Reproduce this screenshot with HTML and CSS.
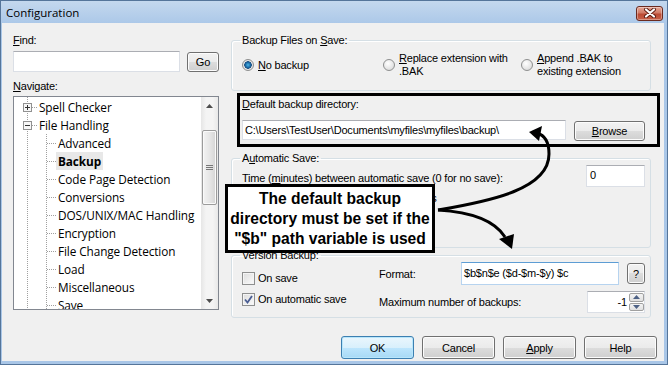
FILE: index.html
```html
<!DOCTYPE html>
<html lang="en">
<head>
    <meta charset="UTF-8">
    <title>Configuration</title>
    <link rel="stylesheet" href="styles.css">
</head>
<body>
    <div class="window">
        <div class="titlebar">
            <span class="title">Configuration</span>
            <div class="close-btn">
                <svg width="14" height="10" viewBox="0 0 14 10">
                    <path d="M3 1.5 L11 8.5 M11 1.5 L3 8.5" stroke="#5a1a10" stroke-width="4" stroke-linecap="round"/>
                    <path d="M3 1.5 L11 8.5 M11 1.5 L3 8.5" stroke="#ffffff" stroke-width="2.2" stroke-linecap="round"/>
                </svg>
            </div>
        </div>

        <div class="client">
            <div class="main">
                <!-- Find + navigation tree -->
                <div class="nav-panel">
                    <div class="lbl"><u>F</u>ind:</div>
                    <div class="find-row">
                        <div class="text-input find-input"></div>
                        <div class="btn go-btn">Go</div>
                    </div>
                    <div class="lbl nav-lbl"><u>N</u>avigate:</div>
                    <div class="tree">
                        <ul class="tree-list">
                            <li class="node">
                                <span class="expander">
                                    <svg width="9" height="9" viewBox="0 0 9 9"><rect x="0.5" y="0.5" width="8" height="8" fill="#f7f7f7" stroke="#919191"/><path d="M2 4.5 H7 M4.5 2 V7" stroke="#333"/></svg>
                                </span><span class="dots"></span><span class="node-text">Spell Checker</span>
                            </li>
                            <li class="node">
                                <span class="expander">
                                    <svg width="9" height="9" viewBox="0 0 9 9"><rect x="0.5" y="0.5" width="8" height="8" fill="#f7f7f7" stroke="#919191"/><path d="M2 4.5 H7" stroke="#333"/></svg>
                                </span><span class="dots"></span><span class="node-text">File Handling</span>
                            </li>
                            <li>
                                <ul class="children">
                                    <li class="node"><span class="dots"></span><span class="node-text">Advanced</span></li>
                                    <li class="node"><span class="dots"></span><span class="node-text selected">Backup</span></li>
                                    <li class="node"><span class="dots"></span><span class="node-text">Code Page Detection</span></li>
                                    <li class="node"><span class="dots"></span><span class="node-text">Conversions</span></li>
                                    <li class="node"><span class="dots"></span><span class="node-text">DOS/UNIX/MAC Handling</span></li>
                                    <li class="node"><span class="dots"></span><span class="node-text">Encryption</span></li>
                                    <li class="node"><span class="dots"></span><span class="node-text">File Change Detection</span></li>
                                    <li class="node"><span class="dots"></span><span class="node-text">Load</span></li>
                                    <li class="node"><span class="dots"></span><span class="node-text">Miscellaneous</span></li>
                                    <li class="node"><span class="dots"></span><span class="node-text">Save</span></li>
                                </ul>
                            </li>
                        </ul>
                        <div class="vscroll">
                            <div class="sb-arrow">
                                <svg width="7" height="4" viewBox="0 0 7 4"><path d="M0 4 L3.5 0 L7 4 Z" fill="#4d4d4d"/></svg>
                            </div>
                            <div class="sb-track">
                                <div class="sb-thumb"><span class="grip"></span></div>
                            </div>
                            <div class="sb-arrow">
                                <svg width="7" height="4" viewBox="0 0 7 4"><path d="M0 0 L3.5 4 L7 0 Z" fill="#4d4d4d"/></svg>
                            </div>
                        </div>
                    </div>
                </div>

                <!-- Backup settings -->
                <div class="settings">
                    <fieldset class="group group-save">
                        <legend>Backup Files on <u>S</u>ave:</legend>
                        <div class="radio-row">
                            <div class="option opt-none"><span class="radio checked"></span><span><u>N</u>o backup</span></div>
                            <div class="option opt-replace"><span class="radio"></span><span><u>R</u>eplace extension with<br>.BAK</span></div>
                            <div class="option"><span class="radio"></span><span><u>A</u>ppend .BAK to<br>existing extension</span></div>
                        </div>
                    </fieldset>

                    <div class="highlight">
                        <div class="lbl"><u>D</u>efault backup directory:</div>
                        <div class="dir-row">
                            <div class="text-input dir-input">C:\Users\TestUser\Documents\myfiles\myfiles\backup\</div>
                            <div class="btn browse-btn"><u>B</u>rowse</div>
                        </div>
                    </div>

                    <fieldset class="group group-auto">
                        <legend>A<u>u</u>tomatic Save:</legend>
                        <div class="field-row">
                            <span class="time-lbl">Time (<u>m</u>inutes) between automatic save (0 for no save):</span>
                            <div class="text-input num-input">0</div>
                        </div>
                        <div class="check-row"><span class="checkbox"></span><span>Automatically save all new documents</span></div>
                    </fieldset>

                    <fieldset class="group group-version">
                        <legend>Version Backup:</legend>
                        <div class="version-body">
                            <div class="checks">
                                <div class="check-row"><span class="checkbox"></span><span>On save</span></div>
                                <div class="check-row">
                                    <span class="checkbox">
                                        <svg width="9" height="9" viewBox="0 0 9 9"><path d="M1 4.5 L3.5 7.5 L8 1" fill="none" stroke="#4a5d93" stroke-width="1.8"/></svg>
                                    </span><span>On automatic save</span>
                                </div>
                            </div>
                            <div class="version-fields">
                                <div class="field-row">
                                    <span class="format-lbl">Format:</span>
                                    <div class="text-input format-input">$b$n$e ($d-$m-$y) $c</div>
                                    <div class="btn help-btn">?</div>
                                </div>
                                <div class="field-row">
                                    <span>Maximum number of backups:</span>
                                    <div class="spin">
                                        <div class="text-input spin-input">-1</div>
                                        <div class="spin-btns">
                                            <div class="spin-btn"><svg width="7" height="4" viewBox="0 0 7 4"><path d="M0 4 L3.5 0 L7 4 Z" fill="#4d6185"/></svg></div>
                                            <div class="spin-btn"><svg width="7" height="4" viewBox="0 0 7 4"><path d="M0 0 L3.5 4 L7 0 Z" fill="#4d6185"/></svg></div>
                                        </div>
                                    </div>
                                </div>
                            </div>
                        </div>
                    </fieldset>
                </div>
            </div>

            <div class="dialog-buttons">
                <div class="btn btn-default">OK</div>
                <div class="btn">Cancel</div>
                <div class="btn"><u>A</u>pply</div>
                <div class="btn">Help</div>
            </div>
        </div>

        <!-- annotation -->
        <div class="callout">The default backup directory must be set if the "$b" path variable is used</div>
        <svg class="arrows" width="668" height="365" viewBox="0 0 668 365">
            <path d="M437 209 C 490 200, 548 188, 548 153 C 548 140, 543 134, 536 132" fill="none" stroke="#000" stroke-width="3"/>
            <path d="M528 131 L541 125 L538 140 Z" fill="#000"/>
            <path d="M437 209 C 470 211, 494 220, 504 236" fill="none" stroke="#000" stroke-width="3"/>
            <path d="M511 248 L498 238 L513 233 Z" fill="#000"/>
        </svg>
    </div>
</body>
</html>
```

FILE: styles.css
```css
* {
    box-sizing: border-box;
}

body {
    margin: 0;
    background: #ffffff;
    font-family: "Liberation Sans", Arial, sans-serif;
    font-size: 11px;
    letter-spacing: -0.2px;
    color: #000;
}

u {
    text-decoration-thickness: 1px;
    text-underline-offset: 1px;
}

.window {
    position: relative;
    width: 668px;
    height: 365px;
    display: flex;
    flex-direction: column;
    border: 1px solid #55759a;
    background: linear-gradient(#c4d8ee, #aac7e8 24px, #a9c6e7);
}

/* title bar */
.titlebar {
    height: 22px;
    display: flex;
    align-items: center;
    justify-content: space-between;
    padding: 0 4px 0 5px;
}

.title {
    font-family: "Open Sans", sans-serif;
    font-size: 11.5px;
    letter-spacing: 0;
    color: #000;
}

.close-btn {
    width: 27px;
    height: 15px;
    margin-top: 2px;
    border: 1px solid #6b2a1f;
    border-radius: 3px;
    background: linear-gradient(#e8a896, #d07a66 45%, #bb4a33 55%, #c8624a);
    box-shadow: inset 0 0 0 1px rgba(255,255,255,0.35);
    display: flex;
    align-items: center;
    justify-content: center;
}

.client {
    flex: 1;
    margin: 0 3px 3px 1px;
    background: #f0f0f0;
    padding: 11px 6px 0 11px;
    display: flex;
    flex-direction: column;
}

.main {
    display: flex;
    gap: 12px;
}

.lbl {
    line-height: 13px;
}

/* left panel */
.nav-panel {
    width: 206px;
    display: flex;
    flex-direction: column;
}

.find-row {
    margin-top: 4px;
    display: flex;
    align-items: flex-end;
    gap: 7px;
}

.text-input {
    background: #fff;
    border: 1px solid #dbdfe6;
    border-top-color: #abadb3;
    padding-left: 2px;
    white-space: nowrap;
    overflow: hidden;
}

.find-input {
    width: 167px;
    height: 21px;
}

.btn {
    height: 20px;
    display: flex;
    align-items: center;
    justify-content: center;
    border: 1px solid #707070;
    border-radius: 3px;
    background: linear-gradient(#f2f2f2, #ebebeb 50%, #dddddd 50%, #cfcfcf);
    box-shadow: inset 0 0 0 1px #fcfcfc;
}

.go-btn {
    width: 32px;
}

.nav-lbl {
    margin-top: 8px;
}

.tree {
    margin-top: 3px;
    height: 214px;
    border: 1px solid #828790;
    background: #fff;
    display: flex;
    overflow: hidden;
}

.tree-list,
.children {
    list-style: none;
    margin: 0;
    padding: 0;
}

.tree-list {
    flex: 1;
    padding-top: 1px;
    font-family: "Open Sans", sans-serif;
    font-size: 11.8px;
    letter-spacing: -0.1px;
    background-image: linear-gradient(#a0a0a0 50%, transparent 50%);
    background-size: 1px 2px;
    background-repeat: repeat-y;
    background-position: 13px 0;
    overflow: hidden;
}

.children {
    background-image: linear-gradient(#a0a0a0 50%, transparent 50%);
    background-size: 1px 2px;
    background-repeat: repeat-y;
    background-position: 32px 0;
}

.node {
    height: 18px;
    display: flex;
    align-items: center;
    white-space: nowrap;
}

.expander {
    width: 9px;
    height: 9px;
    margin-left: 9px;
    display: flex;
}

.dots {
    width: 5px;
    height: 1px;
    background: linear-gradient(to right, #a0a0a0 50%, transparent 50%) 0 0 / 2px 1px repeat-x;
}

.children .dots {
    width: 9px;
    margin-left: 33px;
}

.node-text {
    padding: 0 2px;
    line-height: 18px;
}

.node-text.selected {
    font-weight: bold;
    background: #e8e8e8;
}

.vscroll {
    width: 17px;
    display: flex;
    flex-direction: column;
    background: linear-gradient(to right, #e6e6e6, #f4f4f4 30%, #f4f4f4 70%, #e8e8e8);
}

.sb-arrow {
    height: 17px;
    display: flex;
    align-items: center;
    justify-content: center;
}

.sb-track {
    flex: 1;
    padding: 16px 1px 0;
}

.sb-thumb {
    height: 75px;
    border: 1px solid #9b9b9b;
    border-radius: 2px;
    background: linear-gradient(to right, #f3f3f3, #e6e6e6 50%, #d5d5d5);
    box-shadow: inset 0 0 0 1px #fafafa;
    display: flex;
    align-items: center;
    justify-content: center;
}

.grip {
    width: 7px;
    height: 6px;
    background: linear-gradient(#777 1px, transparent 1px) 0 0 / 7px 2px repeat-y;
}

/* right panel */
.settings {
    width: 420px;
    display: flex;
    flex-direction: column;
}

.group {
    margin: 0;
    border: 1px solid #d5dfe5;
    border-radius: 3px;
    padding: 0 5px 0 10px;
    box-shadow: 1px 1px 0 #fff inset;
}

.group legend {
    padding: 0 2px;
    margin-left: -2px;
    line-height: 13px;
}

.group-save {
    padding-top: 5px;
    padding-bottom: 12px;
}

.radio-row {
    display: flex;
}

.option {
    display: flex;
    align-items: center;
    gap: 4px;
    line-height: 13px;
}

.opt-none {
    width: 141px;
}

.opt-replace {
    width: 138px;
}

.radio {
    width: 12px;
    height: 12px;
    flex: none;
    border-radius: 50%;
    border: 1px solid #8e8f8f;
    background: radial-gradient(circle at 40% 35%, #ffffff, #dcdcdc 80%);
}

.radio.checked {
    background: radial-gradient(circle, #4db6e6 0, #1b6aa6 2.5px, #1c4f80 3.5px, #e9e9e9 4px, #d4d4d4 100%);
}

.highlight {
    margin: 2px -9px 0 6px;
    border: 3px solid #000;
    padding: 2px 12px 3px 2px;
}

.dir-row {
    margin-top: 9px;
    display: flex;
    align-items: flex-start;
    gap: 8px;
}

.dir-input {
    width: 324px;
    height: 20px;
    line-height: 18px;
}

.browse-btn {
    width: 71px;
    margin-top: 1px;
}

.group-auto {
    margin-top: 5px;
    height: 96px;
}

.field-row {
    display: flex;
    align-items: center;
    justify-content: space-between;
}

.time-lbl {
    padding-top: 3px;
}

.num-input {
    width: 59px;
    height: 22px;
    line-height: 18px;
    padding-left: 3px;
}

.check-row {
    display: flex;
    align-items: center;
    gap: 3px;
    height: 14px;
}

.group-auto .check-row {
    margin-top: 4px;
}

.checkbox {
    width: 13px;
    height: 13px;
    flex: none;
    border: 1px solid #8e8f8f;
    background: linear-gradient(135deg, #dcdcdc, #fbfbfb);
    box-shadow: inset 0 0 0 1px #f4f4f4;
    display: flex;
    align-items: center;
    justify-content: center;
}

.group-version {
    margin-top: 1px;
    padding-bottom: 4px;
}

.version-body {
    display: flex;
}

.checks {
    width: 137px;
    padding-top: 9px;
    display: flex;
    flex-direction: column;
    gap: 7px;
}

.version-fields {
    flex: 1;
    display: flex;
    flex-direction: column;
    gap: 6px;
}

.format-lbl {
    width: 82px;
}

.format-input {
    width: 158px;
    height: 23px;
    line-height: 20px;
    border-color: #b6d3ef;
    border-top-color: #5d9dd4;
    margin-right: 8px;
}

.help-btn {
    width: 18px;
    height: 21px;
}

.spin {
    display: flex;
    height: 22px;
}

.spin-input {
    width: 42px;
    text-align: right;
    padding-right: 2px;
    line-height: 20px;
    border-right: none;
}

.spin-btns {
    width: 16px;
    display: flex;
    flex-direction: column;
    gap: 1px;
    padding: 1px 0;
    background: #fff;
    border: 1px solid #dbdfe6;
    border-left: none;
    border-top-color: #abadb3;
}

.spin-btn {
    flex: 1;
    border: 1px solid #a0a0a0;
    border-radius: 2px;
    background: linear-gradient(#f4f4f4, #e0e0e0);
    display: flex;
    align-items: center;
    justify-content: center;
}

.dialog-buttons {
    margin-top: 18px;
    display: flex;
    justify-content: flex-end;
    gap: 8px;
    padding-right: 1px;
}

.dialog-buttons .btn {
    width: 73px;
    height: 23px;
}

.btn-default {
    border-color: #3c7fb1;
    background: linear-gradient(#eaf6fd, #d9f0fc 50%, #bee6fd 50%, #a7d9f5);
    box-shadow: inset 0 0 0 1px #b8e6fb;
}

/* annotation overlay */
.callout {
    position: absolute;
    left: 224px;
    top: 183px;
    width: 210px;
    height: 69px;
    border: 3px solid #000;
    background: #fff;
    padding: 2px 2px 0;
    font-weight: bold;
    font-size: 15.6px;
    letter-spacing: 0;
    line-height: 20px;
    text-align: center;
}

.arrows {
    position: absolute;
    left: 0;
    top: 0;
    pointer-events: none;
}
```
